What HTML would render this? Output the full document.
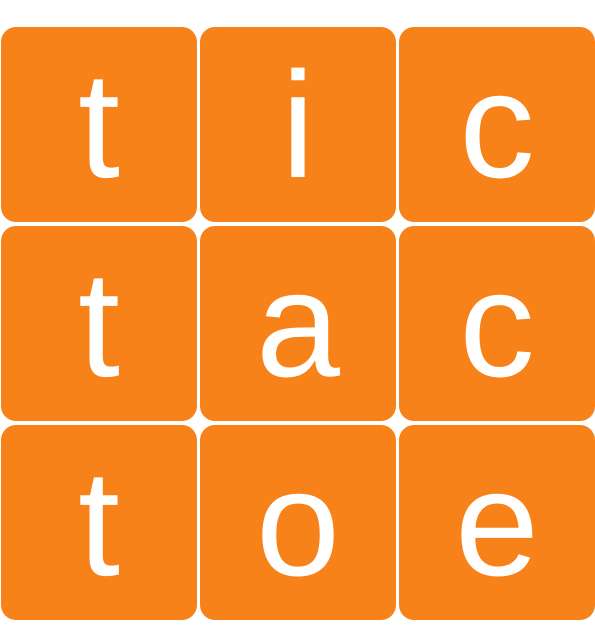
<!DOCTYPE html>
<html><head><style>
html,body{margin:0;padding:0;background:#fff;width:595px;height:632px;overflow:hidden}
.g{position:absolute;left:1px;top:27px;display:grid;grid-template-columns:196px 196px 196px;grid-template-rows:195px 195px 195px;gap:4px 3px}
.c{background:#f8821a;border-radius:15px;color:#fff;font-family:"Liberation Sans",Arial,sans-serif;font-size:151px;display:flex;align-items:center;justify-content:center;line-height:1}
</style></head><body>
<div class="g">
<div class="c">t</div><div class="c">i</div><div class="c">c</div>
<div class="c">t</div><div class="c">a</div><div class="c">c</div>
<div class="c">t</div><div class="c">o</div><div class="c">e</div>
</div>
</body></html>
